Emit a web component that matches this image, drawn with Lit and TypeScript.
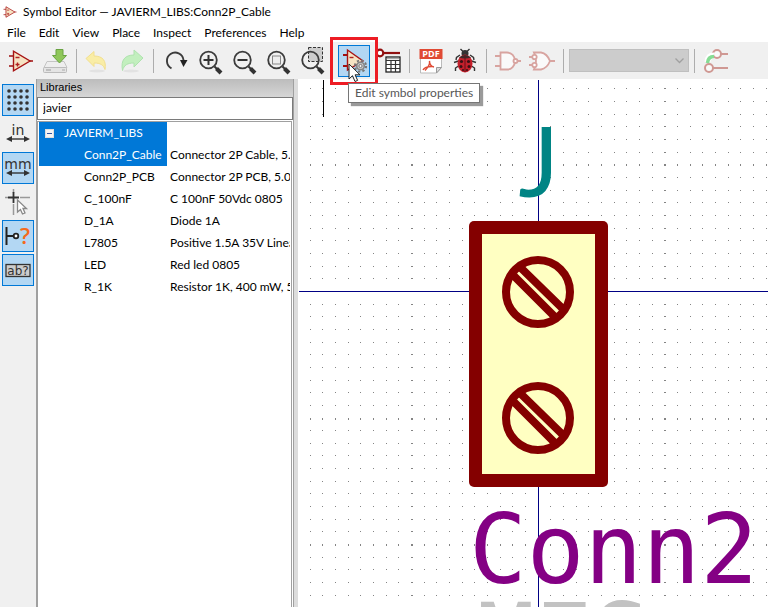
import { LitElement, html, svg, css, nothing, type SVGTemplateResult } from "lit";
import { customElement, property, state } from "lit/decorators.js";
import { classMap } from "lit/directives/class-map.js";

const gear = (cx: number, cy: number) => svg`
  <circle cx=${cx} cy=${cy} r="5.6" fill="none" stroke="#777" stroke-width="2" stroke-dasharray="2.2 2.2"/>
  <circle cx=${cx} cy=${cy} r="3.8" fill="#c8c8c8" stroke="#858585" stroke-width="1.6"/>
  <circle cx=${cx} cy=${cy} r="1.6" fill="#f4f4f4" stroke="#777"/>`;

const lens = (inner: SVGTemplateResult) => svg`
  <path d="M18.5 18.5l3 3" stroke="#333" stroke-width="2"/>
  <path d="M20.5 20.5l4.5 4.5" stroke="#333" stroke-width="4"/>
  <circle cx="12.5" cy="12" r="8.3" fill="none" stroke="#3c3c3c" stroke-width="1.8"/>${inner}`;

const opamp = svg`
  <path d="M1 8h5M1 18h5M21 13h4" stroke="#a01010" stroke-width="1.4"/>
  <path d="M5.5 3.2v19.6L22 13z" fill="#f6e3c3" stroke="#a81414" stroke-width="1.4"/>
  <path d="M7.5 9.5h4M7.5 16.5h4M9.5 14.5v4" stroke="#b02020" stroke-width="1.4"/>`;

const arrows = svg`<path d="M3 18h20" stroke="#333" stroke-width="1.4"/><path d="M1 18l6-3v6zM25 18l-6-3v6z" fill="#333"/>`;

const icons: Record<string, SVGTemplateResult> = {
  opamp,
  save: svg`
    <path d="M5 13.5h17l3 6H2z" fill="#eee" stroke="#c4c4c4"/>
    <rect x="1.5" y="19.5" width="23" height="5" rx="1" fill="#e4e4e4" stroke="#bbb"/>
    <path d="M4 22h5" stroke="#999"/><path d="M20 22h3" stroke="#aaa"/>
    <path d="M14 1.5h7v6h3.5L17.5 15l-7-7.5H14z" fill="#8fc75a" stroke="#6aa343"/>`,
  undo: svg`
    <ellipse cx="12" cy="23" rx="8" ry="1.5" fill="#e2e2e2"/>
    <path d="M1 10.5L9 3.5v4.5c9 0 12.5 5 11 13.5-1.5-4.5-4.5-6.5-11-6.5v3.5z" fill="#f9eda6" stroke="#f2df8e"/>`,
  redo: svg`
    <ellipse cx="12" cy="23" rx="8" ry="1.5" fill="#e2e2e2"/>
    <path d="M24 10L15 2v5C6 7 1.5 12 3.5 22.5c1.5-5.5 5-7.5 11.5-7.5v4z" fill="#c2efbe" stroke="#aee2ae"/>`,
  refresh: svg`
    <path d="M9.5 20.3A8.3 8.3 0 1 1 21.5 12" fill="none" stroke="#3c3c3c" stroke-width="1.9"/>
    <path d="M18 12h7.5L21.5 19z" fill="#222"/>`,
  zoomIn: lens(svg`<path d="M7.5 12h10M12.5 7v10" stroke="#333" stroke-width="2"/>`),
  zoomOut: lens(svg`<path d="M7.5 12h10" stroke="#333" stroke-width="2"/>`),
  zoomFit: lens(svg`<rect x="8.5" y="8" width="8" height="8" fill="#eee" stroke="#888"/>`),
  zoomArea: svg`
    <rect x="10.5" y="-0.5" width="14" height="14" fill="#ccc" stroke="#333" stroke-dasharray="3 1.5"/>${lens(svg``)}`,
  properties: svg`
    <path d="M2 7h5M2 18h5" stroke="#a01010" stroke-width="1.8"/>
    <path d="M6.5 2v20L22 13z" fill="#f6e3c3" stroke="#a81414" stroke-width="1.4"/>
    <path d="M8.5 9.5h4" stroke="#b02020" stroke-width="1.4"/>${gear(19.5, 18)}`,
  pinTable: svg`
    <path d="M9 5h16" stroke="#901010" stroke-width="2.2"/>
    <circle cx="5" cy="5" r="3.3" fill="#fff" stroke="#901010" stroke-width="2.2"/>
    <rect x="11" y="9" width="14" height="15" fill="#fff" stroke="#222" stroke-width="1.3"/>
    <path d="M11 12.5h14M11 16.5h14M11 20.5h14M16 12v12M20.5 12v12" stroke="#333" stroke-width="1.2"/>
    <path d="M12 10.7h12" stroke="#999"/>`,
  datasheet: svg`
    <path d="M2.5 1.5h21v18l-5 5.5h-16z" fill="#fff" stroke="#bbb"/>
    <path d="M23.5 19.5h-5v5.5z" fill="#ddd" stroke="#999"/>
    <path d="M1.5 1h23v10h-23z" fill="#e04a34"/>
    <text x="13" y="9" text-anchor="middle" class="pdf">PDF</text>
    <path d="M5 22c1-2 4-3.5 9-3.5M7 22.5c3-3 5-7 4.5-9.5 0 3 2 5.5 4.5 6" fill="none" stroke="#e04a34" stroke-width="1.4"/>`,
  bug: svg`
    <path d="M8 7L4.5 9.5 4 12M18 7l3.5 2.5.5 2.5M6.5 13L2 14.5M19.5 13l4.5 1.5M6.5 18L3.5 20v3M19.5 18l3 2v3M11 3.5L8.5 1M15 3.5L17.5 1" fill="none" stroke="#333" stroke-width="1.4"/>
    <circle cx="13" cy="5.5" r="3.5" fill="#333"/>
    <ellipse cx="13" cy="15.5" rx="7.5" ry="9" fill="#c4202c"/>
    <path d="M7 9.5q6-5 12 0-6 2-12 0z" fill="#3c2a2a"/>
    <path d="M13 8v16" stroke="#641018"/>
    <g fill="#3a1014"><circle cx="9.5" cy="13.5" r="1.6"/><circle cx="16.5" cy="13.5" r="1.6"/><circle cx="9" cy="18.5" r="1.5"/><circle cx="17" cy="18.5" r="1.5"/><circle cx="11" cy="22" r="1"/><circle cx="15" cy="22" r="1"/></g>`,
  nand: svg`
    <g fill="none" stroke="#d8a4a0" stroke-width="1.8"><path d="M0 8h5M0 18h5M22 13h4"/>
    <path d="M5.5 4.5H12a8 8.5 0 0 1 0 17H5.5z" fill="#fafafa"/><circle cx="20.5" cy="13" r="2" fill="#fff"/></g>`,
  nor: svg`
    <g fill="none" stroke="#d8a4a0" stroke-width="1.8"><path d="M0 9h3M0 17h3M21 13h5"/>
    <path d="M5 4.5h7q6 1 9 8.500-3 7.500-9 8.500H5q4-8.500 0-17z" fill="#fafafa"/>
    <circle cx="5.5" cy="9" r="2.2" fill="#fff"/><circle cx="5.5" cy="17" r="2.2" fill="#fff"/></g>`,
  pinSync: svg`
    <g stroke="#cf9893" stroke-width="2" fill="#fafafa"><path d="M15 6h10M7 20h18"/><circle cx="14" cy="6" r="4"/><circle cx="6" cy="20" r="4"/></g>
    <path d="M4.5 14Q5 7.5 11 7.5" fill="none" stroke="#fff" stroke-width="6"/>
    <path d="M4.5 15Q5 8.5 11 8.5" fill="none" stroke="#86dc94" stroke-width="3.5"/>`,
  grid: svg`${[4, 10, 16, 22].map((y) => [4, 10, 16, 22].map((x) => svg`<circle cx=${x} cy=${y} r="1.8" fill="#333"/>`))}`,
  inch: svg`<text x="13" y="14" text-anchor="middle" class="unit">in</text>${arrows}`,
  mm: svg`<text x="13" y="14" text-anchor="middle" class="unit">mm</text>${arrows}`,
  crosshair: svg`
    <path d="M8.5 0v4M8.5 15v11M0 8.5h3M15 8.5h10" stroke="#999" stroke-width="1.5"/>
    <path d="M8.5 3v11M3 8.5h11" stroke="#333" stroke-width="1.8"/>
    <path d="M12.5 11v12l3-2.5 2 4.5 2.5-1-2-4.5h3.5z" fill="#fff" stroke="#888" stroke-width="1.3"/>`,
  pinHelp: svg`
    <path d="M1.5 4v18M2 13h6" stroke="#222" stroke-width="2"/><circle cx="11" cy="13" r="2.3" fill="#fff" stroke="#222" stroke-width="1.8"/>
    <text x="20" y="21" text-anchor="middle" class="ask">?</text>`,
  label: svg`
    <rect x="1" y="7.5" width="24" height="12" fill="#ccc" stroke="#333" stroke-width="1.3"/>
    <text x="13" y="18" text-anchor="middle" class="ab">ab?</text>`,
};

@customElement("tool-icon")
class ToolIcon extends LitElement {
  static styles = css`
    :host { display: block; width: 26px; height: 26px; }
    .art { display: block; width: 100%; height: 100%; overflow: visible; }
    text { font-family: "Open Sans", "Noto Sans", sans-serif; fill: #333; }
    .pdf { font-size: 9px; font-weight: 700; fill: #fff; }
    .unit { font: 14px "DejaVu Sans", sans-serif; }
    .ask { font-size: 22px; font-weight: 600; fill: #f56a1c; }
    .ab { font: 12px "DejaVu Sans", sans-serif; }
  `;
  @property() name = "";
  render() {
    return html`<svg class="art" viewBox="0 0 26 26" aria-hidden="true">${icons[this.name]}</svg>`;
  }
}

const PITCH = 12.66;
const ORIGIN = { x: 240, y: 212 };

/* Grid dots around the origin; every tenth row or column is drawn heavier. */
function gridPath(): string {
  const parts: string[] = [];
  for (let i = -20; i <= 120; i++) {
    for (let j = -18; j <= 100; j++) {
      if (i === 0 || j === 0) continue;
      const x = Math.floor(ORIGIN.x + 0.2 + i * PITCH);
      const y = Math.floor(ORIGIN.y + 0.4 + j * PITCH);
      const w = i % 10 === 0 ? 2 : 1;
      const h = j % 10 === 0 ? 2 : 1;
      if (x > 0 && y > 0) parts.push(`M${x} ${y}h${w}v${h}h-${w}z`);
    }
  }
  return parts.join("");
}

@customElement("symbol-canvas")
class SymbolCanvas extends LitElement {
  static styles = css`
    :host { display: block; min-width: 0; background: #fff; overflow: hidden; }
    .sheet { display: block; width: 100%; height: 100%; }
    .dots { fill: #848484; shape-rendering: crispEdges; }
    .axis { fill: #000084; shape-rendering: crispEdges; }
    .mark { fill: #000; shape-rendering: crispEdges; }
    .edge { fill: #840000; }
    .body { fill: #ffffc2; }
    .screw { fill: none; stroke: #840000; stroke-width: 8; }
    .field { font: 96px "DejaVu Sans Mono", monospace; }
    .reference { font-family: Lato, sans-serif; fill: #008484; }
    .value { fill: #840084; }
    .footprint { fill: #c2c2c2; }
  `;
  render() {
    const screw = (y: number) => svg`<g class="screw" transform="translate(0 ${y})">
      <circle r="32"/><path d="M-17 -24L24 16M-24 -16L16 24"/></g>`;
    return html`<svg class="sheet" role="img" aria-label="Symbol drawing">
      <path class="dots" d=${gridPath()} />
      <rect class="mark" x="25" y="1" width="1" height="37" />
      <rect class="axis" x="1" y="212" width="100%" height="1" />
      <rect class="axis" x="240" y="1" width="1" height="100%" />
      <g transform="translate(240 213)">
        <text class="field reference" x="21" y="-95" text-anchor="end">J</text>
        <rect class="edge" x="-69" y="-71" width="139" height="266" rx="5" />
        <rect class="body" x="-56" y="-58" width="113" height="240" />
        ${screw(0)}${screw(126)}
        <text class="field value" x="-69" y="291">Conn2</text>
        <text class="field footprint" x="-61" y="380">MES</text>
      </g>
    </svg>`;
  }
}

interface Tool { icon: string; label: string; off?: boolean; on?: boolean; tip?: boolean; }

const toolbar: Tool[][] = [
  [{ icon: "opamp", label: "New symbol" }, { icon: "save", label: "Save", off: true }],
  [{ icon: "undo", label: "Undo", off: true }, { icon: "redo", label: "Redo", off: true }],
  [
    { icon: "refresh", label: "Refresh" },
    { icon: "zoomIn", label: "Zoom in" },
    { icon: "zoomOut", label: "Zoom out" },
    { icon: "zoomFit", label: "Zoom to fit" },
    { icon: "zoomArea", label: "Zoom to selection" },
  ],
  [{ icon: "properties", label: "Edit symbol properties", on: true, tip: true }, { icon: "pinTable", label: "Pin table" }],
  [{ icon: "datasheet", label: "Show datasheet" }, { icon: "bug", label: "Check symbol" }],
  [{ icon: "nand", label: "Standard body style", off: true }, { icon: "nor", label: "Alternate body style", off: true }],
];

const sideTools: Tool[] = [
  { icon: "grid", label: "Show grid", on: true },
  { icon: "inch", label: "Inches" },
  { icon: "mm", label: "Millimetres", on: true },
  { icon: "crosshair", label: "Full-window crosshair" },
  { icon: "pinHelp", label: "Show pin electrical types", on: true },
  { icon: "label", label: "Show hidden fields", on: true },
];

const parts = [
  ["Conn2P_Cable", "Connector 2P Cable, 5."],
  ["Conn2P_PCB", "Connector 2P PCB, 5.08"],
  ["C_100nF", "C 100nF 50Vdc 0805"],
  ["D_1A", "Diode 1A"],
  ["L7805", "Positive 1.5A 35V Linea"],
  ["LED", "Red led 0805"],
  ["R_1K", "Resistor 1K, 400 mW, 5%"],
];

@customElement("app-root")
class AppRoot extends LitElement {
  static styles = css`
    :host {
      display: flex; flex-direction: column; height: 100vh; overflow: hidden;
      background: #f0f0f0; color: #000;
      font: 12px/16px Lato, "Open Sans", sans-serif;
    }
    * { box-sizing: border-box; }
    button, input, select { font: inherit; color: inherit; margin: 0; border-radius: 0; }
    .title { display: flex; align-items: center; gap: 6px; height: 24px; padding: 0 3px; background: #fff; }
    .title h1 { margin: 0; font: inherit; white-space: nowrap; }
    .logo { width: 14px; height: 14px; }
    .menu { display: flex; gap: 1px; height: 18px; background: #fff; padding: 0 1px; }
    .menu button { border: 0; background: none; padding: 0 6px; line-height: 18px; }
    .bar { display: flex; align-items: center; height: 37px; padding: 0 4px; }
    .tool {
      position: relative; flex: none; display: grid; place-items: center;
      width: 32px; height: 32px; margin: 0 1px; padding: 0; border: 1px solid transparent; background: none;
    }
    .tool.on { background: #b3d7f3; border-color: #0078d7; }
    .sep { flex: none; width: 1px; height: 24px; margin: 0 4px; background: #adadad; }
    .unit {
      appearance: none; flex: none; width: 120px; height: 23px; margin: 0 1px;
      border: 1px solid #bfbfbf; background: #ccc; opacity: 1;
    }
    .combo { position: relative; display: flex; }
    .chevron { position: absolute; right: 6px; top: 9px; width: 9px; height: 6px; }
    .ring { position: absolute; inset: -9px; border: 3px solid #ed1c24; pointer-events: none; z-index: 1; }
    .tip {
      position: absolute; left: 9px; top: 37px; z-index: 3; height: 20px; padding: 0 6px;
      border: 1px solid #767676; background: #fff; color: #575757; line-height: 18px; white-space: nowrap;
      box-shadow: 3px 3px 1px #9a9a9a;
    }
    .pointer { position: absolute; left: 9px; top: 17px; z-index: 2; width: 13px; height: 20px; }
    .main { flex: 1; min-height: 0; display: grid; grid-template-columns: 36px 258px 4px minmax(0, 1fr); }
    .side { display: flex; flex-direction: column; gap: 2px; padding: 5px 1px; }
    .panel { display: flex; flex-direction: column; min-width: 0; border: solid #a0a0a0; border-width: 0 1px; background: #fff; }
    .panel h2 {
      margin: 0; height: 18px; padding: 0 3px; font: 11px/17px "Liberation Sans", Arial, sans-serif;
      background: linear-gradient(#bcbcbc, #d6d6d6);
    }
    .filter { width: 100%; height: 23px; border: 1px solid #7a7a7a; padding: 0 5px 2px; background: #fff; outline: 0; }
    .list { flex: 1; margin: 1px 1px 0 0; padding: 0 1px; border: 1px solid #a0a0a0; border-width: 1px 1px 0 1px; overflow: hidden; }
    .tree { width: 100%; table-layout: fixed; border-collapse: collapse; }
    .names { width: 128px; }
    .tree td { height: 22px; padding: 0 0 0 3px; overflow: hidden; white-space: nowrap; line-height: 20px; }
    .tree .name { padding-left: 45px; }
    .tree .lib { padding-left: 6px; }
    .sel { background: #0078d7; color: #fff; }
    .node { display: flex; align-items: center; gap: 10px; }
    .fold { display: grid; place-items: center; width: 9px; height: 9px; padding: 0; border: 1px solid #ddd; background: #f4f4f4; }
    .fold::before { content: ""; width: 5px; height: 1px; background: #3355a0; }
    .sash { background: #dcdcdc; }
  `;
  @state() private filter = "javier";

  private tool(t: Tool) {
    return html`<button class=${classMap({ tool: true, on: !!t.on })} aria-label=${t.label} ?disabled=${t.off}>
      <tool-icon name=${t.icon}></tool-icon>
      ${t.tip
        ? html`<span class="ring"></span><span class="tip" role="tooltip">${t.label}</span>
            <svg class="pointer" viewBox="0 0 13 20" aria-hidden="true">
              <path d="M1 1v15l3.500-3.300L7 18.500l2.600-1.100-2.500-5.600H12z" fill="#fff" stroke="#222" />
            </svg>`
        : nothing}
    </button>`;
  }

  render() {
    return html`
      <header class="title">
        <svg class="logo" viewBox="0 0 26 26" aria-hidden="true">${opamp}</svg>
        <h1>Symbol Editor — JAVIERM_LIBS:Conn2P_Cable</h1>
      </header>
      <nav class="menu">
        ${["File", "Edit", "View", "Place", "Inspect", "Preferences", "Help"].map((m) => html`<button>${m}</button>`)}
      </nav>
      <div class="bar" role="toolbar">
        ${toolbar.map((group) => html`${group.map((t) => this.tool(t))}<span class="sep"></span>`)}
        <div class="combo">
          <select class="unit" aria-label="Symbol unit" disabled></select>
          <svg class="chevron" viewBox="0 0 9 6" aria-hidden="true"><path d="M.5 .5l4 4 4-4" fill="none" stroke="#a0a0a0" stroke-width="1.3" /></svg>
        </div>
        <span class="sep"></span>
        ${this.tool({ icon: "pinSync", label: "Synchronized pins", off: true })}
      </div>
      <div class="main">
        <div class="side" role="toolbar">${sideTools.map((t) => this.tool(t))}</div>
        <section class="panel">
          <h2>Libraries</h2>
          <input class="filter" aria-label="Filter" .value=${this.filter}
            @input=${(e: Event) => (this.filter = (e.target as HTMLInputElement).value)} />
          <div class="list">
            <table class="tree">
              <colgroup><col class="names" /><col /></colgroup>
              <tbody>
                <tr><td class="lib sel"><div class="node"><button class="fold" aria-label="Collapse"></button>JAVIERM_LIBS</div></td><td></td></tr>
                ${parts.map(([name, text], i) => html`<tr><td class=${classMap({ name: true, sel: i === 0 })}>${name}</td><td>${text}</td></tr>`)}
              </tbody>
            </table>
          </div>
        </section>
        <div class="sash"></div>
        <symbol-canvas></symbol-canvas>
      </div>
    `;
  }
}
